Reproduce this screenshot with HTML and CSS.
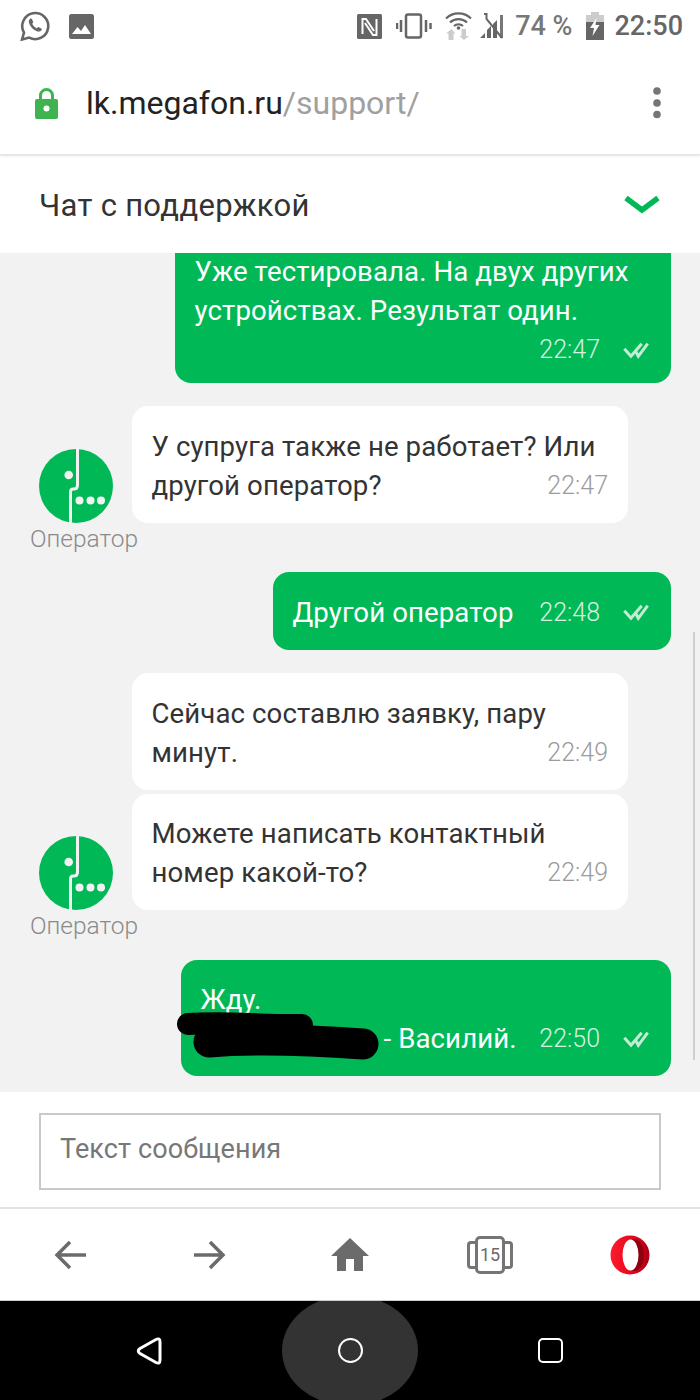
FILE: index.html
```html
<!DOCTYPE html>
<html lang="ru">
<head>
<meta charset="utf-8">
<title>Чат с поддержкой</title>
<link rel="stylesheet" href="styles.css">
</head>
<body>
<div class="phone">
  <header class="status">
    <svg class="i-wa" viewBox="0 0 30 30"><path class="wa-line" d="M2 28.5 L4 21.6 A13 13 0 1 1 9.2 26.6 Z"/><path class="wa-fill" d="M10.2 7.8c-1 .8-1.600 2-1.300 3.400 .8 4 4.600 8 8.600 9.200 1.500.4 3 0 4-1.200 .5-.6.3-1.500-.3-1.800l-2.300-1.200c-.6-.3-1.100 0-1.500.6-.3.5-.8.6-1.200.3-1.500-.8-3-2.300-3.800-3.800-.2-.5 0-.8.300-1.200 .5-.5.6-.9.400-1.400l-1-2.400c-.3-.8-1.200-.9-1.900-.5z"/></svg>
    <svg class="i-img" viewBox="0 0 25 25"><rect width="25" height="25" rx="2.500" fill="#666"/><path d="M3 20 L8.500 13 L12 17 L16 11 L22 20 Z" fill="#fff"/></svg>
    <span class="grow"></span>
    <svg class="i-nfc" viewBox="0 0 25 25"><rect width="25" height="25" rx="1.500" fill="#666"/><path d="M5.500 20 V5 H9 L17 17 M8 9 L16 21 H19.500 V5" fill="none" stroke="#fff" stroke-width="2"/></svg>
    <svg class="i-vib" viewBox="0 0 36 26"><rect x="10" y="1.500" width="15" height="23" rx="2" fill="none" stroke="#666" stroke-width="2.500"/><path d="M5 7V19M1 10V16M30 7V19M34.500 10V16" stroke="#666" stroke-width="2.500"/></svg>
    <svg class="i-wifi" viewBox="0 0 27 28"><path d="M1 6.500 A18 18 0 0 1 26 6.500 M5 10.500 A12.500 12.500 0 0 1 22 10.500 M9 14 A7 7 0 0 1 18 14" fill="none" stroke="#666" stroke-width="2.200"/><circle cx="13.500" cy="16" r="1.800" fill="#666"/><path d="M3.500 28V21.500H1L6.500 17L10.500 21.500H8.500V28ZM16.500 17H21V24H24L19 28L14.500 24H16.500Z" fill="#ccc"/></svg>
    <svg class="i-sig" viewBox="0 0 24 26"><path d="M0 25L5 20V25ZM7 25V17L11 13V25ZM13 25V11L17 7V25Z" fill="#666"/><path d="M20 2H23V25H20Z" fill="#777"/><path d="M4 1H6.500V6L22 25" fill="none" stroke="#666" stroke-width="2"/></svg>
    <span class="pct">74 %</span>
    <svg class="i-bat" viewBox="0 0 18 28"><path d="M5 0H13V3H18V10H0V3H5Z" fill="#ccc"/><path d="M0 10H18V28H0Z" fill="#666"/><path d="M10.500 6L4 16H8L6.500 24L13.500 13H9.500Z" fill="#fff"/></svg>
    <span class="clock">22:50</span>
  </header>

  <nav class="urlbar">
    <svg class="i-lock" viewBox="0 0 23 31"><path d="M5.500 13V7.500a6 6 0 0 1 12 0V13" fill="none" stroke="#3fb350" stroke-width="3"/><rect y="11" width="23" height="20" rx="2" fill="#3fb350"/><circle cx="11.500" cy="20.500" r="3" fill="#fff"/></svg>
    <div class="url"><span class="host">lk.megafon.ru</span><span class="path">/support/</span></div>
    <svg class="i-dots" viewBox="0 0 8 32"><circle cx="4" cy="4" r="3.800"/><circle cx="4" cy="16" r="3.800"/><circle cx="4" cy="27.500" r="3.800"/></svg>
  </nav>

  <div class="chat-head">
    <h1 class="chat-title">Чат с поддержкой</h1>
    <svg class="i-chev" viewBox="0 0 36 20"><path d="M2 3L18 15L34 3" fill="none" stroke="#00b956" stroke-width="5.500"/></svg>
  </div>

  <main class="chat">
    <div class="bubble out w-first">
      <p class="line">Уже тестировала. На двух других</p>
      <p class="line">устройствах. Результат один.</p>
      <div class="line meta-line"><span class="grow"></span><time class="time">22:47</time><svg class="check" viewBox="0 0 28 18"><path d="M2.300 7.700L9 15.300L19.700 2.700M14 11L16.300 15.300L25.700 2.700" fill="none" stroke="#c4ecd3" stroke-width="3"/></svg></div>
    </div>

    <div class="row">
      <div class="op">
        <svg class="logo" viewBox="0 0 74 74"><circle cx="37" cy="37" r="37" fill="#00b956"/><path d="M38.500 0V36Q38.500 40 35 40H34Q31.500 40 31.500 43V74" fill="none" stroke="#f2f2f2" stroke-width="3"/><circle cx="29.700" cy="26" r="4.300" fill="#f2f2f2"/><circle cx="40.500" cy="51.500" r="4" fill="#f2f2f2"/><circle cx="51.500" cy="51.500" r="4" fill="#f2f2f2"/><circle cx="62" cy="51.500" r="4" fill="#f2f2f2"/></svg>
        <span class="op-name">Оператор</span>
      </div>
      <div class="stack">
        <div class="bubble in">
          <p class="line">У супруга также не работает? Или</p>
          <div class="line meta-line"><span>другой оператор?</span><span class="grow"></span><time class="time">22:47</time></div>
        </div>
      </div>
    </div>

    <div class="bubble out w-mid">
      <div class="line meta-line"><span>Другой оператор</span><span class="grow"></span><time class="time">22:48</time><svg class="check" viewBox="0 0 28 18"><path d="M2.300 7.700L9 15.300L19.700 2.700M14 11L16.300 15.300L25.700 2.700" fill="none" stroke="#c4ecd3" stroke-width="3"/></svg></div>
    </div>

    <div class="row">
      <div class="op">
        <svg class="logo" viewBox="0 0 74 74"><circle cx="37" cy="37" r="37" fill="#00b956"/><path d="M38.500 0V36Q38.500 40 35 40H34Q31.500 40 31.500 43V74" fill="none" stroke="#f2f2f2" stroke-width="3"/><circle cx="29.700" cy="26" r="4.300" fill="#f2f2f2"/><circle cx="40.500" cy="51.500" r="4" fill="#f2f2f2"/><circle cx="51.500" cy="51.500" r="4" fill="#f2f2f2"/><circle cx="62" cy="51.500" r="4" fill="#f2f2f2"/></svg>
        <span class="op-name">Оператор</span>
      </div>
      <div class="stack">
        <div class="bubble in">
          <p class="line">Сейчас составлю заявку, пару</p>
          <div class="line meta-line"><span>минут.</span><span class="grow"></span><time class="time">22:49</time></div>
        </div>
        <div class="bubble in">
          <p class="line">Можете написать контактный</p>
          <div class="line meta-line"><span>номер какой-то?</span><span class="grow"></span><time class="time">22:49</time></div>
        </div>
      </div>
    </div>

    <div class="bubble out w-last">
      <p class="line">Жду.</p>
      <div class="line meta-line">
        <span class="hidden-num"><svg class="scribble" viewBox="0 0 210 60"><path d="M11 21C50 18 90 23 125 22" fill="none" stroke="#000" stroke-width="22" stroke-linecap="round"/><path d="M32 39C80 35 130 37 186 41" fill="none" stroke="#000" stroke-width="31" stroke-linecap="round"/></svg></span>
        <span>- Василий.</span><span class="grow"></span><time class="time">22:50</time><svg class="check" viewBox="0 0 28 18"><path d="M2.300 7.700L9 15.300L19.700 2.700M14 11L16.300 15.300L25.700 2.700" fill="none" stroke="#c4ecd3" stroke-width="3"/></svg>
      </div>
    </div>
    <div class="scrollbar"></div>
  </main>

  <div class="composer">
    <div class="field">Текст сообщения</div>
  </div>

  <nav class="toolbar">
    <svg class="i-arrow" viewBox="0 0 32 30"><path d="M16 2L3 15L16 28M3 15H32" fill="none" stroke="#6b6b6b" stroke-width="3.500"/></svg>
    <svg class="i-arrow" viewBox="0 0 32 30"><path d="M16 2L29 15L16 28M29 15H0" fill="none" stroke="#6b6b6b" stroke-width="3.500"/></svg>
    <svg class="i-home" viewBox="0 0 38 33"><path d="M19 0L38 18H32V33H23V21H15V33H6V18H0Z" fill="#6b6b6b"/></svg>
    <div class="tabs"><span class="tab-side left"></span><span class="tab-main">15</span><span class="tab-side right"></span></div>
    <svg class="i-opera" viewBox="0 0 40 40"><defs><linearGradient id="og" x1="0" x2="1"><stop offset="0" stop-color="#ff1b2d"/><stop offset=".6" stop-color="#e3051b"/><stop offset="1" stop-color="#a70014"/></linearGradient></defs><circle cx="20" cy="20" r="19.500" fill="url(#og)"/><ellipse cx="24.500" cy="20" rx="9.500" ry="16" fill="#8f0010"/><ellipse cx="20.500" cy="20" rx="8" ry="15.500" fill="#fff"/></svg>
  </nav>

  <nav class="android">
    <svg class="i-nav" viewBox="0 0 26 28"><path d="M4 11.500L20 2.500Q24 .5 24 5V23Q24 27.500 20 25.500L4 16.500Q.5 14 4 11.500Z" fill="none" stroke="#fff" stroke-width="3"/></svg>
    <div class="home-pill"><span class="home-ring"></span></div>
    <span class="recent"></span>
  </nav>
</div>
</body>
</html>
```
FILE: styles.css
```css
* { box-sizing: border-box; }
html, body { margin: 0; padding: 0; }
body { font-family: Roboto, "Noto Sans", sans-serif; background: #fff; }
.phone { width: 700px; height: 1400px; display: flex; flex-direction: column; overflow: hidden; }
.grow { flex: 1; }

.status { height: 52px; flex: none; display: flex; align-items: center; padding: 0 17px 0 20px; background: #fff; color: #777; }
.i-wa { width: 30px; height: 30px; margin-right: 19px; }
.wa-line { fill: none; stroke: #666; stroke-width: 2.6; }
.wa-fill { fill: #666; }
.i-img { width: 25px; height: 25px; }
.i-nfc { width: 25px; height: 25px; margin-right: 14px; }
.i-vib { width: 36px; height: 26px; margin-right: 13px; }
.i-wifi { width: 27px; height: 28px; margin-right: 8px; }
.i-sig { width: 24px; height: 26px; margin-right: 11px; }
.pct { font-size: 27px; font-weight: 500; margin-right: 14px; }
.i-bat { width: 18px; height: 28px; margin-right: 10px; }
.clock { font-size: 27px; font-weight: 500; color: #666; }

.urlbar { height: 103px; flex: none; display: flex; align-items: center; padding: 0 39px 0 35px; background: #fff; border-bottom: 1px solid #e6e6e6; box-shadow: 0 1px 2px rgba(0,0,0,.12); position: relative; }
.i-lock { width: 23px; height: 31px; margin-right: 28px; }
.url { flex: 1; font-size: 32px; }
.host { color: #222; }
.path { color: #a0a0a0; }
.i-dots { width: 8px; height: 32px; fill: #757575; }

.chat-head { height: 98px; flex: none; display: flex; align-items: center; justify-content: space-between; padding: 2px 40px 0 39px; background: #fff; }
.chat-title { margin: 0; font-size: 31px; letter-spacing: .3px; font-weight: 400; color: #333; }
.i-chev { width: 36px; height: 20px; }

.chat { height: 839px; flex: none; position: relative; overflow: hidden; background: #f2f2f2; display: flex; flex-direction: column; justify-content: flex-end; gap: 23.5px; padding: 0 29px 16px 0; }
.bubble { flex: none; padding: 20.5px 20px 18px 19.5px; border-radius: 16px; font-size: 27.6px; letter-spacing: .1px; }
.bubble.out { align-self: flex-end; background: #00b956; color: #fff; padding-right: 21px; }
.bubble.in { width: 496px; background: #fff; color: #333; }
.bubble.w-first { width: 496px; padding-bottom: 13.5px; }
.w-mid { width: 398px; }
.w-last { width: 490px; }
.line { margin: 0; height: 39px; line-height: 39px; white-space: nowrap; }
.meta-line { display: flex; align-items: center; }
.time { font-size: 25px; font-weight: 300; letter-spacing: 0; }
.out .time { color: #d5f3e0; }
.in .time { color: #9c9c9c; }
.check { width: 28px; height: 18px; margin-left: 22px; }
.row { flex: none; display: flex; padding-left: 30px; padding-bottom: 26px; }
.op { width: 108px; margin-right: -6px; align-self: flex-end; margin-bottom: -30px; display: flex; flex-direction: column; align-items: center; }
.logo { width: 74px; height: 74px; margin-bottom: 2px; align-self: flex-start; margin-left: 9px; }
.op-name { font-size: 24.5px; font-weight: 300; line-height: 28px; color: #8a8a8a; }
.stack { display: flex; flex-direction: column; gap: 4px; }
.hidden-num { width: 183px; flex: none; position: relative; height: 39px; }
.scribble { position: absolute; left: -24px; top: -16px; width: 210px; height: 60px; }
.scrollbar { position: absolute; right: 5px; top: 379px; width: 2px; height: 428px; background: #cfcfcf; }

.composer { height: 115px; flex: none; padding: 21px 39px 0; background: #fff; }
.field { height: 77px; border: 2px solid #c9c9c9; display: flex; align-items: center; padding: 0 0 5px 19px; font-size: 27px; letter-spacing: .1px; color: #777; }

.toolbar { height: 94px; flex: none; display: grid; grid-template-columns: repeat(5, 140px); justify-items: center; align-items: center; background: #fff; border-top: 2px solid #e2e2e2; border-bottom: 1px solid #ccc; }
.i-arrow { width: 32px; height: 30px; }
.i-home { width: 38px; height: 33px; }
.tabs { display: flex; align-items: center; }
.tab-main { width: 30px; height: 38px; border: 3.5px solid #757575; border-radius: 5px; display: flex; align-items: center; justify-content: center; font-size: 18px; color: #6b6b6b; }
.tab-side { width: 8px; height: 28px; border: 3.5px solid #757575; }
.tab-side.left { border-right: 0; border-radius: 4px 0 0 4px; }
.tab-side.right { border-left: 0; border-radius: 0 4px 4px 0; }
.i-opera { width: 40px; height: 40px; }

.android { flex: 1; display: grid; grid-template-columns: repeat(3, 200px); grid-template-rows: 99px; width: 700px; padding: 0 50px; justify-items: center; align-items: center; background: #000; overflow: hidden; }
.i-nav { width: 26px; height: 28px; margin-left: -2px; }
.home-pill { width: 136px; height: 111px; flex: none; border-radius: 50%; background: #333; display: flex; align-items: center; justify-content: center; }
.home-ring { width: 25px; height: 25px; border-radius: 50%; border: 2.5px solid #fff; }
.recent { width: 25px; height: 25px; border-radius: 5px; border: 2.5px solid #fff; }
```
